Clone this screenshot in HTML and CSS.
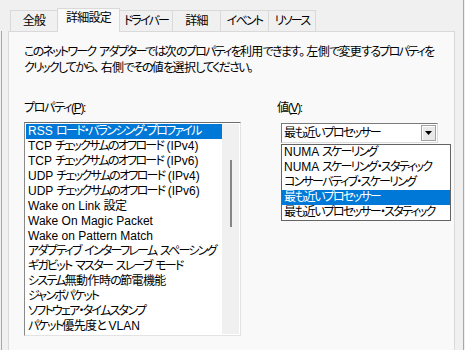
FILE: index.html
```html
<!DOCTYPE html>
<html lang="ja">
<head>
<meta charset="utf-8">
<title>詳細設定</title>
<link rel="stylesheet" href="styles.css">
</head>
<body>
<div class="screen">
  <div class="main">
    <div class="tabs">
      <div class="tab tab-kanji w-general">全般</div>
      <div class="tab tab-kanji tab-active w-advanced">詳細設定</div>
      <div class="tab w-driver">ドライバー</div>
      <div class="tab tab-kanji w-details">詳細</div>
      <div class="tab w-events">イベント</div>
      <div class="tab w-resources">リソース</div>
    </div>
    <div class="body-row">
      <div class="edge-left"></div>
      <div class="pane">
        <p class="intro">このネットワーク アダプターでは<span class="kanji">次</span>のプロパティを<span class="kanji">利用</span>できます<span class="punct">。</span><span class="kanji">左側</span>で<span class="kanji">変更</span>するプロパティを<br>クリックしてから<span class="punct">、</span><span class="kanji">右側</span>でその<span class="kanji">値</span>を<span class="kanji">選択</span>してください<span class="punct">。</span></p>
        <div class="columns">
          <div class="col-left">
            <div class="label">プロパティ(<u>P</u>):</div>
            <div class="listbox">
              <ul class="items">
                <li class="item selected"><span class="latin">RSS </span>ロード・バランシング・プロファイル</li>
                <li class="item"><span class="latin">TCP </span>チェックサムのオフロード<span class="latin"> (IPv4)</span></li>
                <li class="item"><span class="latin">TCP </span>チェックサムのオフロード<span class="latin"> (IPv6)</span></li>
                <li class="item"><span class="latin">UDP </span>チェックサムのオフロード<span class="latin"> (IPv4)</span></li>
                <li class="item"><span class="latin">UDP </span>チェックサムのオフロード<span class="latin"> (IPv6)</span></li>
                <li class="item"><span class="latin">Wake on Link </span><span class="kanji">設定</span></li>
                <li class="item"><span class="latin">Wake On Magic Packet</span></li>
                <li class="item"><span class="latin">Wake on Pattern Match</span></li>
                <li class="item">アダプティブ インターフレーム スペーシング</li>
                <li class="item">ギガビット マスター スレーブ モード</li>
                <li class="item">システム<span class="kanji">無動作時</span>の<span class="kanji">節電機能</span></li>
                <li class="item">ジャンボパケット</li>
                <li class="item">ソフトウェア・タイムスタンプ</li>
                <li class="item">パケット<span class="kanji">優先度</span>と<span class="latin"> VLAN</span></li>
              </ul>
              <div class="scrollbar"><div class="thumb"></div></div>
            </div>
          </div>
          <div class="col-right">
            <div class="label label-value">値(<u>V</u>):</div>
            <div class="combo-wrap">
              <div class="combo">
                <span class="combo-text">最も近いプロセッサー</span>
                <span class="combo-btn"><svg width="7" height="4" viewBox="0 0 7 4"><polygon points="0,0 7,0 3.5,4" fill="#000"/></svg></span>
              </div>
              <ul class="dropdown">
                <li class="option"><span class="latin">NUMA </span>スケーリング</li>
                <li class="option"><span class="latin">NUMA </span>スケーリング・スタティック</li>
                <li class="option">コンサーバティブ・スケーリング</li>
                <li class="option selected">最も近いプロセッサー</li>
                <li class="option">最も近いプロセッサー・スタティック</li>
              </ul>
            </div>
          </div>
        </div>
      </div>
    </div>
  </div>
  <div class="edge-right"></div>
</div>
</body>
</html>
```

FILE: styles.css
```css
* { box-sizing: border-box; }

body {
  margin: 0;
  background: #f0f0f0;
  font-family: "Liberation Sans", "Noto Sans CJK JP", sans-serif;
  font-size: 12px;
  font-feature-settings: "palt";
  letter-spacing: -1.75px;
  word-spacing: 2px;
  color: #000;
}

.latin { letter-spacing: 0; word-spacing: 0; }
.kanji { letter-spacing: -0.6px; }
.punct { letter-spacing: 1px; }

.screen {
  display: flex;
  width: 465px;
  height: 350px;
  overflow: hidden;
}

.main {
  display: flex;
  flex-direction: column;
  width: 463px;
}

.edge-right {
  width: 1px;
  background: #a8a8a8;
}

/* Tabs */
.tabs {
  display: flex;
  align-items: flex-end;
  height: 31px;
  padding-left: 10px;
  letter-spacing: -1.8px;
}

.tab {
  height: 21px;
  border: 1px solid #d9d9d9;
  border-bottom: none;
  background: #f0f0f0;
  text-align: center;
  line-height: 20px;
  white-space: nowrap;
}

.tab-kanji { letter-spacing: -0.75px; }

.tab + .tab { margin-left: -1px; }

.tab-active {
  position: relative;
  z-index: 1;
  height: 24px;
  margin-bottom: -1px;
  background: #f9f9f9;
  line-height: 18px;
}

.w-general { width: 48px; }
.w-advanced { width: 63px; }
.w-driver { width: 54px; }
.w-details { width: 49px; }
.w-events { width: 49px; }
.w-resources { width: 48px; }

/* Body */
.body-row {
  display: flex;
  flex: 1;
}

.edge-left {
  width: 1px;
  margin-left: 1px;
  background: #a8a8a8;
}

.pane {
  width: 447px;
  margin-left: 6px;
  border: 1px solid #d9d9d9;
  border-bottom: none;
  background: #f9f9f9;
  padding: 12px 0 0 15px;
}

.intro {
  margin: 0;
  line-height: 16px;
  white-space: nowrap;
}

.columns {
  display: flex;
  margin-top: 24px;
}

.label {
  line-height: 16px;
  margin-bottom: 6px;
  letter-spacing: -1.3px;
}

.label-value { margin-bottom: 7px; }

.col-left { width: 217px; }

.col-right {
  margin-left: 36px;
  width: 174px;
}

/* Listbox */
.listbox {
  display: flex;
  width: 217px;
  background: #fff;
  border: 1px solid;
  border-color: #6d6d6d #e3e3e3 #e3e3e3 #8a8a8a;
  padding: 1px;
}

.items {
  list-style: none;
  margin: 0;
  padding: 0;
  flex: 1;
  min-width: 0;
}

.item {
  height: 15px;
  line-height: 15px;
  padding-left: 2px;
  white-space: nowrap;
  overflow: hidden;
}

.item.selected,
.option.selected {
  background: #0078d7;
  color: #fff;
}

.scrollbar {
  flex: none;
  width: 17px;
  background: #f0f0f0;
  display: flex;
  justify-content: center;
}

.thumb {
  width: 2px;
  height: 67px;
  margin-top: 36px;
  background: #858585;
}

/* Combo */
.combo-wrap {
  position: relative;
  margin-left: 4px;
}

.combo {
  display: flex;
  align-items: center;
  width: 157px;
  height: 20px;
  background: #fff;
  border: 1px solid;
  border-color: #7a7a7a #dcdcdc #dcdcdc #7a7a7a;
  padding: 1px;
}

.combo-text {
  flex: 1;
  padding-left: 1px;
  line-height: 16px;
  white-space: nowrap;
}

.combo-btn {
  display: flex;
  align-items: center;
  justify-content: center;
  width: 15px;
  height: 16px;
  background: #e9e9e9;
  border: 1px solid #a0a0a0;
  box-shadow: inset 1px 1px 0 #fff;
}

.dropdown {
  position: absolute;
  left: 0;
  top: 21px;
  z-index: 2;
  width: 170px;
  margin: 0;
  padding: 0;
  list-style: none;
  background: #fff;
  border: 1px solid #646464;
}

.option {
  height: 15px;
  line-height: 15px;
  padding-left: 2px;
  white-space: nowrap;
}
```
